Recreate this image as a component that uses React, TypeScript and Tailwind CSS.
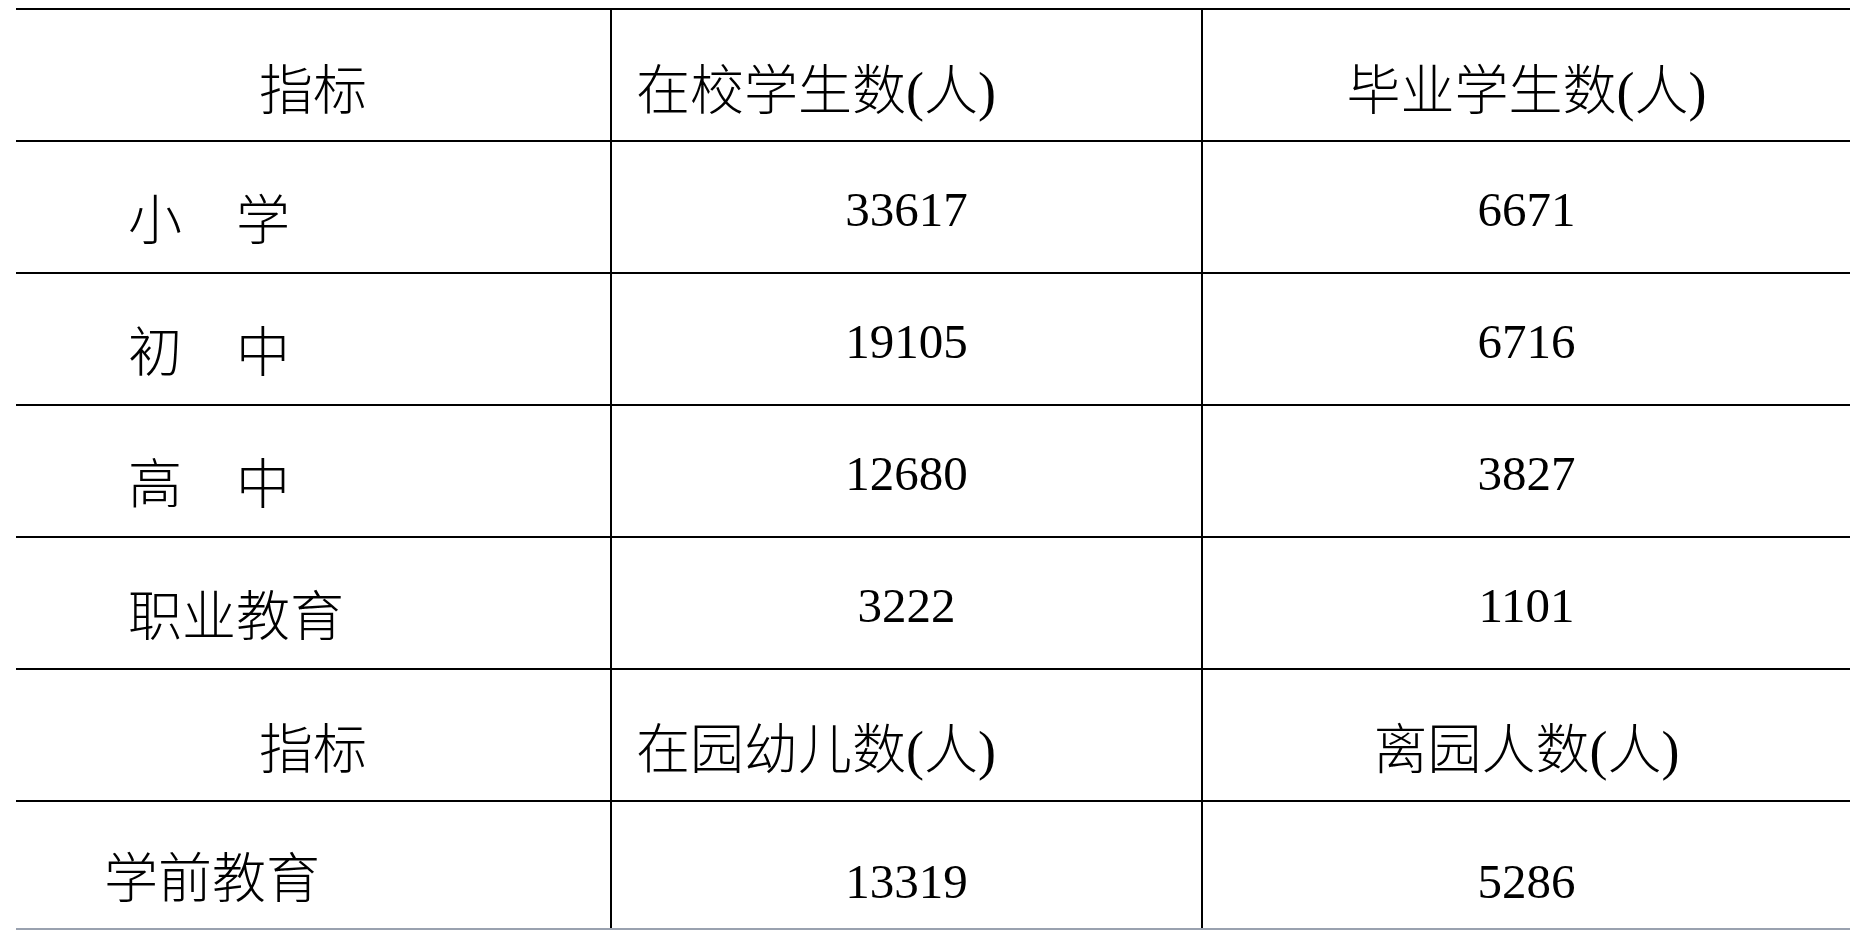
import React from "react";

const serif = "font-['Liberation_Serif','Noto_Sans_CJK_SC',serif]";

type Cell = { text: string; kind: "label" | "head" | "num" | "center"; pad?: string };

const rows: { cells: Cell[]; h: string; numPad: string; textPad: string }[] = [
  {
    h: "h-[132px]",
    numPad: "pt-0",
    textPad: "pt-[34px]",
    cells: [
      { text: "指标", kind: "center" },
      { text: "在校学生数(人)", kind: "head" },
      { text: "毕业学生数(人)", kind: "center" },
    ],
  },
  {
    h: "h-[132px]",
    numPad: "pt-[4px]",
    textPad: "pt-[30px]",
    cells: [
      { text: "小　学", kind: "label", pad: "pl-[112px]" },
      { text: "33617", kind: "num" },
      { text: "6671", kind: "num" },
    ],
  },
  {
    h: "h-[132px]",
    numPad: "pt-[4px]",
    textPad: "pt-[30px]",
    cells: [
      { text: "初　中", kind: "label", pad: "pl-[112px]" },
      { text: "19105", kind: "num" },
      { text: "6716", kind: "num" },
    ],
  },
  {
    h: "h-[132px]",
    numPad: "pt-[4px]",
    textPad: "pt-[30px]",
    cells: [
      { text: "高　中", kind: "label", pad: "pl-[112px]" },
      { text: "12680", kind: "num" },
      { text: "3827", kind: "num" },
    ],
  },
  {
    h: "h-[132px]",
    numPad: "pt-[4px]",
    textPad: "pt-[30px]",
    cells: [
      { text: "职业教育", kind: "label", pad: "pl-[112px]" },
      { text: "3222", kind: "num" },
      { text: "1101", kind: "num" },
    ],
  },
  {
    h: "h-[132px]",
    numPad: "pt-0",
    textPad: "pt-[32px]",
    cells: [
      { text: "指标", kind: "center" },
      { text: "在园幼儿数(人)", kind: "head" },
      { text: "离园人数(人)", kind: "center" },
    ],
  },
  {
    h: "h-[130px]",
    numPad: "pt-[32px]",
    textPad: "pt-[30px]",
    cells: [
      { text: "学前教育", kind: "label", pad: "pl-[88px]" },
      { text: "13319", kind: "num" },
      { text: "5286", kind: "num" },
    ],
  },
];

function TableCell({
  cell,
  col,
  numPad,
  textPad,
}: {
  cell: Cell;
  col: number;
  numPad: string;
  textPad: string;
}) {
  const divider = col > 0 ? "border-l-2 border-black" : "";
  if (cell.kind === "num") {
    return (
      <div className={`flex items-center justify-center ${divider} ${numPad}`}>
        <span className="text-[49px] leading-none">{cell.text}</span>
      </div>
    );
  }
  const align =
    cell.kind === "center"
      ? "justify-center"
      : cell.kind === "head"
        ? "justify-start pl-[24px]"
        : `justify-start ${cell.pad ?? ""}`;
  return (
    <div className={`flex items-center ${textPad} ${align} ${divider}`}>
      <span className="text-[54px] leading-none font-light whitespace-pre">{cell.text}</span>
    </div>
  );
}

export default function App() {
  return (
    <div className={`w-[1850px] h-[931px] overflow-hidden bg-white text-black ${serif}`}>
      <div className="ml-[16px] mt-[8px]">
        {rows.map((row, i) => (
          <div
            key={i}
            className={`grid grid-cols-[594px_591px_1fr] border-t-2 border-black ${row.h} ${
              i === rows.length - 1 ? "border-b-2 border-b-gray-400" : ""
            }`}
          >
            {row.cells.map((cell, c) => (
              <TableCell key={c} cell={cell} col={c} numPad={row.numPad} textPad={row.textPad} />
            ))}
          </div>
        ))}
      </div>
    </div>
  );
}
